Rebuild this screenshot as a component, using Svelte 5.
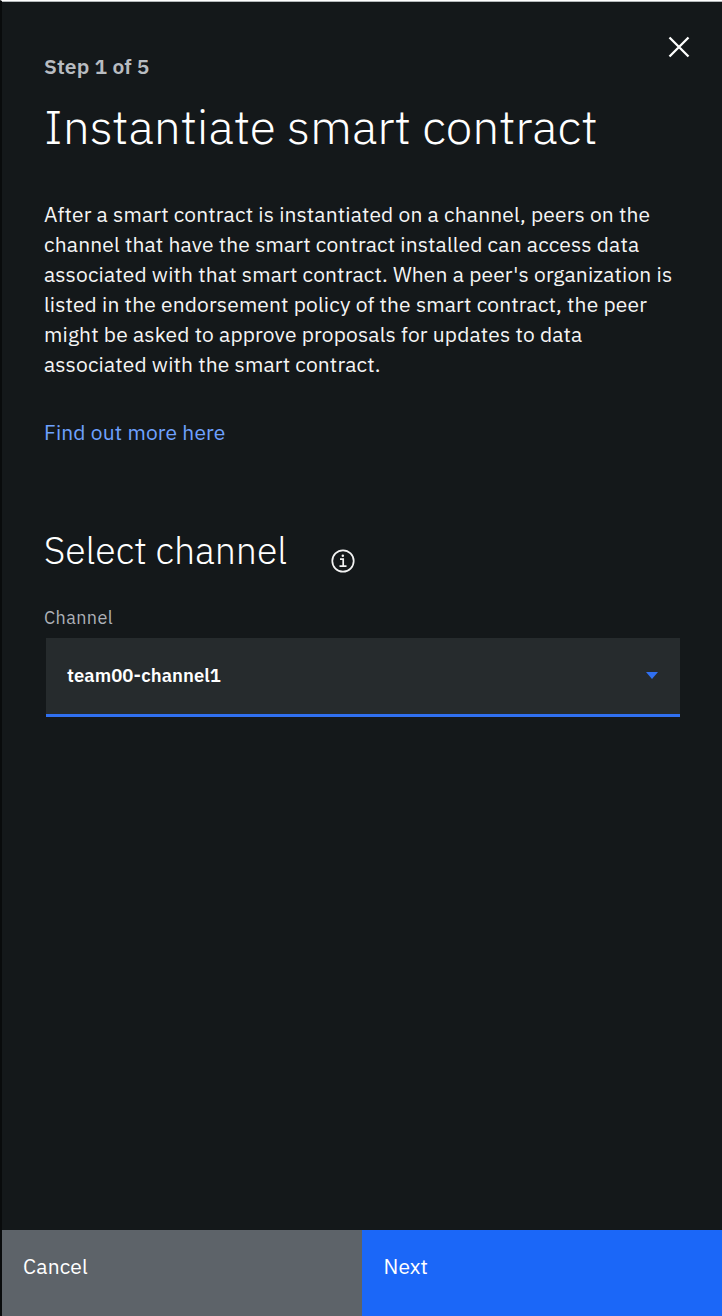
<script>
  const paragraph = [
    ['After a smart contract is instantiated on a channel, peers on the', 606.3],
    ['channel that have the smart contract installed can access data', 595.3],
    ["associated with that smart contract. When a peer's organization is", 628.3],
    ['listed in the endorsement policy of the smart contract, the peer', 603],
    ['might be asked to approve proposals for updates to data', 538.5],
    ['associated with the smart contract.', 336.6]
  ];
  // Spreads each text over its intended width.
  function fit(node, width) {
    const run = () => {
      node.style.letterSpacing = '0px';
      const w = node.getBoundingClientRect().width;
      node.style.letterSpacing = (width - w) / node.textContent.length + 'px';
    };
    run();
    document.fonts?.ready.then(run);
  }
</script>

<main class="panel">
  <header>
    <div class="step"><span use:fit={105.6}>Step 1 of 5</span></div>
    <button class="close" aria-label="Close">
      <svg width="22" height="22" viewBox="0 0 22 22"><path d="M1.5 1.5 20.5 20.5M20.5 1.5 1.5 20.5" fill="none" stroke="#fff" stroke-width="2.3" /></svg>
    </button>
  </header>
  <h1><span use:fit={553.5}>Instantiate smart contract</span></h1>
  <p>
    {#each paragraph as [line, width]}
      <span class="line"><span use:fit={width}>{line}</span></span>
    {/each}
  </p>
  <a class="more" href="#more"><span use:fit={181.5}>Find out more here</span></a>
  <div class="section">
    <h2><span use:fit={243}>Select channel</span></h2>
    <svg class="info" width="24" height="24" viewBox="0 0 24 24"><circle cx="12" cy="12" r="10.7" fill="none" stroke="#f3f3f3" stroke-width="1.7" /><path d="M9 10.2h3.2v6.8M8.5 17.2h7" fill="none" stroke="#f3f3f3" stroke-width="1.7" /><circle cx="11.8" cy="6.7" r="1.25" fill="#f3f3f3" /></svg>
  </div>
  <div class="label"><span use:fit={69}>Channel</span></div>
  <div class="select">
    <span class="value" use:fit={154}>team00-channel1</span>
    <svg width="12" height="7" viewBox="0 0 12 7"><path d="M0 0h12L6 7z" fill="#3070f0" /></svg>
  </div>
  <footer>
    <button class="cancel"><span use:fit={65}>Cancel</span></button>
    <button class="next"><span use:fit={44.5}>Next</span></button>
  </footer>
</main>

<style>
  :global(body) { margin: 0; background: #14171a; }
  .panel { box-sizing: border-box; height: 1316px; border-top: 1px solid #fff; border-left: 2px solid #090b0c; box-shadow: inset 0 1px #b4b8ba; background: #14181a; color: #f5f5f5; display: flex; flex-direction: column; padding: 1px 0 0 42px; font-family: 'IBM Plex Sans', Roboto, sans-serif; font-size: 21px; overflow: hidden; }
  span { white-space: nowrap; }
  header { display: flex; justify-content: space-between; height: 92px; flex: none; }
  .step { padding-top: 49px; line-height: 30px; font-weight: 600; color: #b8bcc1; }
  button { border: 0; padding: 0; margin: 0; background: none; font: inherit; color: #fff; text-align: left; }
  .close { width: 22px; height: 22px; margin: 34px 32px 0 0; }
  svg { display: block; }
  h1 { margin: 0; font-size: 48px; font-weight: 300; line-height: 64px; color: #fff; }
  p { margin: 41px 0 0; line-height: 30px; }
  .line { display: block; }
  .more { display: block; margin-top: 38px; line-height: 30px; color: #6ea1ff; text-decoration: none; }
  .section { display: flex; margin-top: 79px; height: 48px; }
  h2 { margin: 0; width: 287px; font-size: 37.5px; line-height: 48px; font-weight: 300; color: #fff; }
  .info { margin-top: 23px; }
  .label { margin-top: 32px; line-height: 24px; font-size: 18px; color: #aeb1b8; }
  .select { box-sizing: border-box; margin: 8px 42px 0 2px; height: 79px; flex: none; display: flex; justify-content: space-between; align-items: center; padding: 0 22px 1px 21px; background: #262b2d; border-bottom: 3px solid #3070f0; font-size: 18.5px; font-weight: 600; color: #fff; }
  .value { padding-bottom: 2px; }
  footer { display: flex; margin: auto 0 0 -42px; height: 86px; flex: none; }
  footer button { flex: 1; padding: 21px 22px 0; display: flex; align-items: flex-start; line-height: 30px; }
  footer .cancel { background: #5d6369; padding-left: 21px; }
  .next { background: #1b67f8; }
</style>
